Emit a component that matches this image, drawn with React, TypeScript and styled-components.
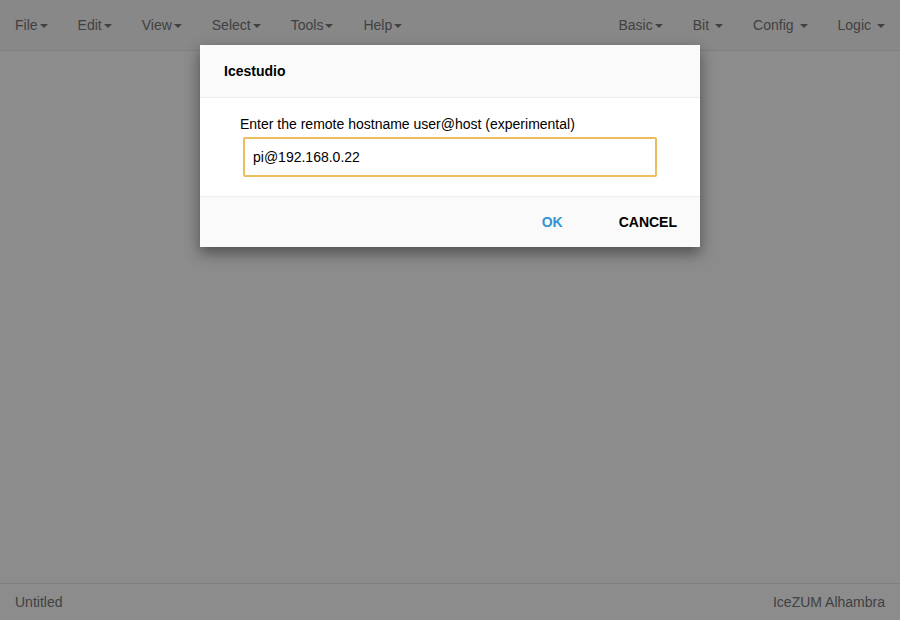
import React from "react";
import styled, { createGlobalStyle } from "styled-components";

const Global = createGlobalStyle`
  html, body { margin: 0; padding: 0; height: 100%; }
  body { font-family: "Liberation Sans", Arial, sans-serif; font-size: 14px; background: #fff; overflow: hidden; }
  #root { height: 100%; }
`;

const Page = styled.div`
  position: relative;
  height: 620px;
  display: flex;
  flex-direction: column;
  background: #fff;
`;

const Navbar = styled.nav`
  height: 50px;
  background: #f8f8f8;
  border-bottom: 1px solid #e7e7e7;
  display: flex;
  justify-content: space-between;
  align-items: stretch;
  flex-shrink: 0;
`;

const NavGroup = styled.ul`
  list-style: none;
  margin: 0;
  padding: 0;
  display: flex;
`;

const NavItem = styled.li`
  display: flex;
  align-items: center;
  padding: 0 15px;
  color: #777;
  font-size: 14px;
  line-height: 20px;
`;

const Caret = styled.span<{ $spaced?: boolean }>`
  display: inline-block;
  width: 0;
  height: 0;
  margin-left: ${(p) => (p.$spaced ? "6px" : "2px")};
  border-top: 4px solid #777;
  border-left: 4px solid transparent;
  border-right: 4px solid transparent;
  vertical-align: middle;
  position: relative;
  top: 1px;
`;

const Main = styled.main`
  flex: 1;
`;

const Footer = styled.footer`
  height: 36px;
  border-top: 1px solid #e7e7e7;
  display: flex;
  justify-content: space-between;
  align-items: center;
  padding: 0 15px 0 15px;
  color: #777;
  font-size: 14px;
  flex-shrink: 0;
`;

const Overlay = styled.div`
  position: absolute;
  inset: 0;
  background: rgba(0, 0, 0, 0.45);
  display: flex;
  justify-content: center;
  align-items: flex-start;
  padding-top: 45px;
`;

const Dialog = styled.div`
  width: 500px;
  background: #fff;
  box-shadow: 0 6px 14px rgba(0, 0, 0, 0.45);
  display: flex;
  flex-direction: column;
`;

const DialogHeader = styled.div`
  height: 52px;
  background: #fafafa;
  border-bottom: 1px solid #eee;
  display: flex;
  align-items: center;
  padding: 0 24px;
  font-weight: bold;
  font-size: 14px;
  color: #000;
`;

const DialogBody = styled.div`
  padding: 16px 43px 19px 40px;
  display: flex;
  flex-direction: column;
`;

const Label = styled.label`
  font-size: 14px;
  line-height: 20px;
  color: #000;
  margin-bottom: 3px;
`;

const Input = styled.input`
  margin-left: 3px;
  height: 40px;
  box-sizing: border-box;
  border: 2px solid #ebbd5c;
  border-radius: 2px;
  padding: 0 8px;
  font-family: "Liberation Sans", Arial, sans-serif;
  font-size: 14px;
  color: #000;
  outline: none;
`;

const DialogFooter = styled.div`
  height: 50px;
  background: #fafafa;
  border-top: 1px solid #eee;
  display: flex;
  justify-content: flex-end;
  align-items: center;
  gap: 56px;
  padding-right: 23px;
`;

const Button = styled.button<{ $primary?: boolean }>`
  background: none;
  border: none;
  padding: 0;
  font-family: "Liberation Sans", Arial, sans-serif;
  font-weight: bold;
  font-size: 14px;
  text-transform: uppercase;
  color: ${(p) => (p.$primary ? "#3593d2" : "#000")};
  cursor: pointer;
`;

const leftMenus = ["File", "Edit", "View", "Select", "Tools", "Help"];
const rightMenus: [string, boolean][] = [
  ["Basic", false],
  ["Bit", true],
  ["Config", true],
  ["Logic", true],
];

export default function App() {
  return (
    <>
      <Global />
      <Page>
        <Navbar>
          <NavGroup>
            {leftMenus.map((m) => (
              <NavItem key={m}>
                {m}
                <Caret />
              </NavItem>
            ))}
          </NavGroup>
          <NavGroup>
            {rightMenus.map(([m, sp]) => (
              <NavItem key={m}>
                {m}
                <Caret $spaced={sp} />
              </NavItem>
            ))}
          </NavGroup>
        </Navbar>
        <Main />
        <Footer>
          <span>Untitled</span>
          <span>IceZUM Alhambra</span>
        </Footer>
        <Overlay>
          <Dialog>
            <DialogHeader>Icestudio</DialogHeader>
            <DialogBody>
              <Label>Enter the remote hostname user@host (experimental)</Label>
              <Input defaultValue="pi@192.168.0.22" />
            </DialogBody>
            <DialogFooter>
              <Button $primary>OK</Button>
              <Button>Cancel</Button>
            </DialogFooter>
          </Dialog>
        </Overlay>
      </Page>
    </>
  );
}
